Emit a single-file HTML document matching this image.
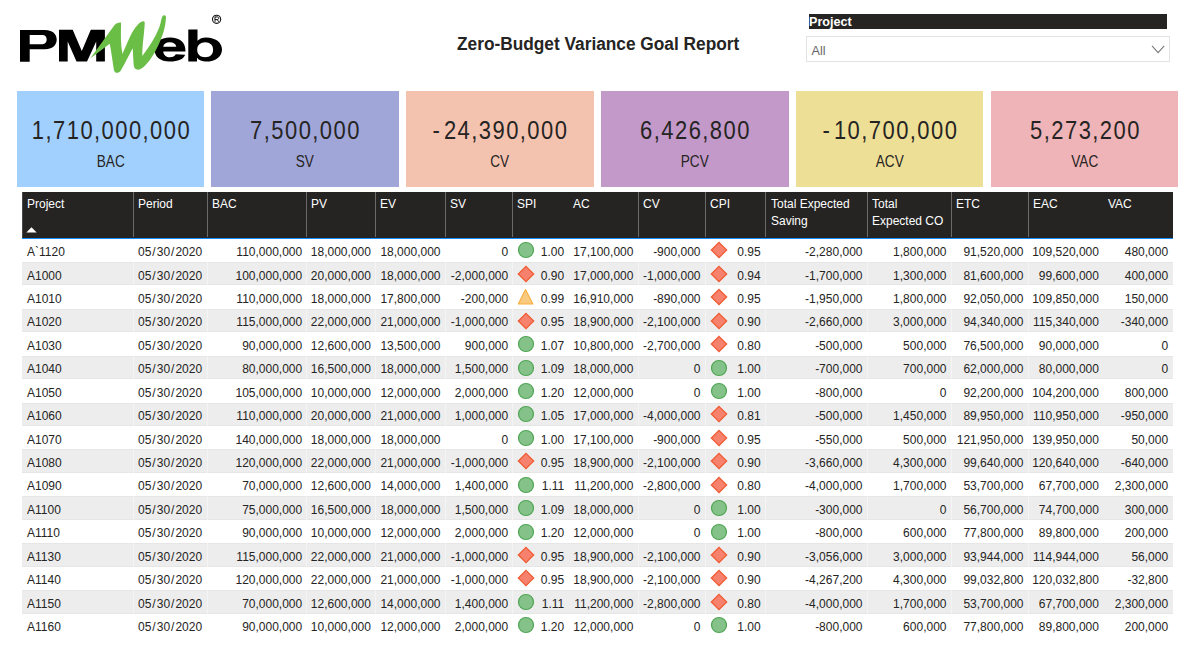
<!DOCTYPE html>
<html><head><meta charset="utf-8"><style>
*{margin:0;padding:0;box-sizing:border-box}
html,body{width:1192px;height:660px;overflow:hidden;background:#fff;font-family:"Liberation Sans",sans-serif;color:#252423}
.a{position:absolute;white-space:nowrap}
.card{position:absolute;top:90.5px;height:96.2px;width:187.3px}
.kv{position:absolute;left:0;right:0;text-align:center;top:115px;font-size:25.5px;line-height:30px;color:#252423;letter-spacing:1.7px;text-indent:1.7px;transform:scaleX(0.86)}
.kl{position:absolute;left:0;right:0;text-align:center;top:152.6px;font-size:15.8px;line-height:18px;color:#252423;transform:scaleX(0.86)}
.hdr{position:absolute;background:#252423}
.ht{position:absolute;color:#fff;font-size:12px;line-height:17px;white-space:nowrap}
.sep{position:absolute;width:1px;background:#6a6a6a}
.row{position:absolute;left:22px;width:1150.8px}
.c{position:absolute;font-size:12px;line-height:14px;white-space:nowrap;color:#252423}
.r{text-align:right}
.sl{margin:0 1.0px}
.ic{position:absolute}
.gsep{position:absolute;width:1px;background:#f4f4f4}
</style></head><body>
<svg class="a" style="left:0;top:0" width="240" height="80" viewBox="0 0 240 80">
<path fill-rule="evenodd" fill="#000" d="M20 29.9 H45 C52 29.9 56.7 33.5 56.7 39.6 C56.7 45.7 52 49.3 45 49.3 H29.7 V61.8 H20 Z M29.7 35.1 H42.5 C45.2 35.1 46.7 37 46.7 39.6 C46.7 42.3 45.2 44.2 42.5 44.2 H29.7 Z"/>
<path fill="#000" d="M59 61.6 V29.8 H72.7 L81.8 51 L90.8 29.8 H104.9 V61.6 H96.2 V41.4 L87 61.6 H76.5 L67.7 41.4 V61.6 Z"/>
<path fill-rule="evenodd" fill="#000" d="M185.4 51.4 H163.2 C163.7 55.2 166.2 57.3 170 57.3 C172.8 57.3 174.8 56.2 175.8 54.3 L185.2 54.8 C183.5 59.3 178 61.6 170 61.6 C160 61.6 154.5 56.5 154.5 49.5 C154.5 42.5 160 37.4 170 37.4 C180 37.4 185.4 42.5 185.4 50 Z M163.2 46.8 H176.3 C175.8 43.8 173.5 42.2 169.7 42.2 C166 42.2 163.7 43.8 163.2 46.8 Z"/>
<path fill-rule="evenodd" fill="#000" d="M188.3 29.4 H197.5 V40.8 C199.5 38.6 202.5 37.4 206 37.4 C215.5 37.4 222 42.3 222 49.5 C222 56.8 215.5 61.6 206 61.6 C202 61.6 199 60.3 197 57.8 V61.6 H188.3 Z M197.2 49.7 C197.2 54.5 200.5 57.2 205.2 57.2 C210 57.2 213.1 54.5 213.1 49.7 C213.1 45 210 42.2 205.2 42.2 C200.5 42.2 197.2 45 197.2 49.7 Z"/>
<path fill="#6abd45" d="M90.4 58.3 L105.1 38 L114.4 25.2 C115.8 23.3 118 22.4 120.2 22.4 C121 22.4 121.2 23 121.1 24 C120.8 34 120.6 44 122.4 54 C127 44 132 30 138 24.5 C140 22.5 142 21.3 143.5 21.3 C144.5 21.3 144.8 22 144.7 23 C144.5 32 142.2 44 142.3 56 C150 46 158 33 160.6 23 C161.4 19 162 15.5 164 15.2 C165.5 15 166.2 16 166 17.5 C165.5 27 163 36 157 48 C151 60 143 69.7 138.2 69.7 C135 69.7 133.8 67.5 133.6 64 L132.7 48.2 C128 57 123 67 120.5 71 C119.5 72.3 118 72.8 116.8 72.8 C114.5 72.8 113.8 70.5 113.6 68 C112.5 60 111 50 109.7 43.8 L91.5 57.6 C90.9 58.1 90.3 58.6 90.4 58.3 Z"/>
<circle cx="216.6" cy="19.3" r="4.1" fill="none" stroke="#111" stroke-width="1.1"/>
<path d="M215 21.8 V16.9 H217 C218.2 16.9 218.7 17.5 218.7 18.3 C218.7 19.1 218.1 19.6 217 19.6 H215 M217.2 19.6 L218.8 21.8" fill="none" stroke="#111" stroke-width="1"/>
</svg>
<div class="a" style="left:457.3px;top:33.2px;font-size:18.3px;line-height:22px;font-weight:bold;color:#252423;transform:scaleX(0.945);transform-origin:0 0">Zero-Budget Variance Goal Report</div>
<div class="a" style="left:809px;top:14.3px;width:358.2px;height:15px;background:#252423"></div>
<div class="a" style="left:809px;top:15px;font-size:12.6px;line-height:14px;font-weight:bold;color:#fff">Project</div>
<div class="a" style="left:806px;top:36.2px;width:363.5px;height:25.5px;border:1px solid #e3e3e3;background:#fff"></div>
<div class="a" style="left:811.5px;top:43.5px;font-size:12.6px;line-height:14px;color:#666">All</div>
<svg class="a" style="left:1150px;top:44px" width="16" height="11" viewBox="0 0 16 11"><path d="M2 1.8 L8.1 8.7 L14.2 1.8" fill="none" stroke="#7a7a7a" stroke-width="1.1"/></svg>
<div class="card" style="left:16.5px;background:#a2d0fe"></div><div class="a kv" style="left:16.5px;width:187.5px;right:auto">1,710,000,000</div><div class="a kl" style="left:16.5px;width:187.5px;right:auto">BAC</div>
<div class="card" style="left:211.4px;background:#a1a6d9"></div><div class="a kv" style="left:211.4px;width:187.5px;right:auto">7,500,000</div><div class="a kl" style="left:211.4px;width:187.5px;right:auto">SV</div>
<div class="card" style="left:406.3px;background:#f4c3b0"></div><div class="a kv" style="left:406.3px;width:187.5px;right:auto"><span style="margin-right:3px">-</span>24,390,000</div><div class="a kl" style="left:406.3px;width:187.5px;right:auto">CV</div>
<div class="card" style="left:601.3px;background:#c399c9"></div><div class="a kv" style="left:601.3px;width:187.5px;right:auto">6,426,800</div><div class="a kl" style="left:601.3px;width:187.5px;right:auto">PCV</div>
<div class="card" style="left:796.2px;background:#eedf97"></div><div class="a kv" style="left:796.2px;width:187.5px;right:auto"><span style="margin-right:3px">-</span>10,700,000</div><div class="a kl" style="left:796.2px;width:187.5px;right:auto">ACV</div>
<div class="card" style="left:991.1px;background:#efb4b7"></div><div class="a kv" style="left:991.1px;width:187.5px;right:auto">5,273,200</div><div class="a kl" style="left:991.1px;width:187.5px;right:auto">VAC</div>
<div class="hdr" style="left:22.0px;top:191.7px;width:1150.8px;height:46.9px"></div>
<div class="a" style="left:22.0px;top:237.8px;width:1150.8px;height:1.2px;background:#118dff"></div>
<div class="a" style="left:22.0px;top:192.0px;width:1px;height:45.6px;background:#4a4a4a"></div><div class="sep" style="left:132.8px;top:192.0px;height:45.3px"></div><div class="sep" style="left:206.8px;top:192.0px;height:45.3px"></div><div class="sep" style="left:305.5px;top:192.0px;height:45.3px"></div><div class="sep" style="left:374.5px;top:192.0px;height:45.3px"></div><div class="sep" style="left:444.8px;top:192.0px;height:45.3px"></div><div class="sep" style="left:511.9px;top:192.0px;height:45.3px"></div><div class="sep" style="left:638.2px;top:192.0px;height:45.3px"></div><div class="sep" style="left:704.5px;top:192.0px;height:45.3px"></div><div class="sep" style="left:764.5px;top:192.0px;height:45.3px"></div><div class="sep" style="left:867.0px;top:192.0px;height:45.3px"></div><div class="sep" style="left:950.9px;top:192.0px;height:45.3px"></div><div class="sep" style="left:1028.1px;top:192.0px;height:45.3px"></div>
<div class="ht" style="left:27px;top:196px">Project</div><div class="ht" style="left:138px;top:196px">Period</div><div class="ht" style="left:212px;top:196px">BAC</div><div class="ht" style="left:311px;top:196px">PV</div><div class="ht" style="left:380px;top:196px">EV</div><div class="ht" style="left:450px;top:196px">SV</div><div class="ht" style="left:517px;top:196px">SPI</div><div class="ht" style="left:573px;top:196px">AC</div><div class="ht" style="left:643px;top:196px">CV</div><div class="ht" style="left:710px;top:196px">CPI</div><div class="ht" style="left:771px;top:196px">Total Expected<br>Saving</div><div class="ht" style="left:872px;top:196px">Total<br>Expected CO</div><div class="ht" style="left:956px;top:196px">ETC</div><div class="ht" style="left:1033px;top:196px">EAC</div><div class="ht" style="left:1108px;top:196px">VAC</div><svg class="a" style="left:26px;top:227px" width="11" height="6" viewBox="0 0 11 6"><path d="M0.3 5.6 L5.5 0.3 L10.7 5.6 Z" fill="#fff"/></svg>
<div class="c" style="left:27px;top:245.06px">A`1120</div><div class="c" style="left:138px;top:245.06px">05<span class="sl">/</span>30<span class="sl">/</span>2020</div><div class="c r" style="right:889.8px;top:245.06px">110,000,000</div><div class="c r" style="right:821.1px;top:245.06px">18,000,000</div><div class="c r" style="right:751.5px;top:245.06px">18,000,000</div><div class="c r" style="right:683.8px;top:245.06px">0</div><div class="c r" style="right:627.8px;top:245.06px">1.00</div><div class="c r" style="right:558.6px;top:245.06px">17,100,000</div><div class="c r" style="right:491.5px;top:245.06px">-900,000</div><div class="c r" style="right:431.3px;top:245.06px">0.95</div><div class="c r" style="right:329.5px;top:245.06px">-2,280,000</div><div class="c r" style="right:245.5px;top:245.06px">1,800,000</div><div class="c r" style="right:168.5px;top:245.06px">91,520,000</div><div class="c r" style="right:93.1px;top:245.06px">109,520,000</div><div class="c r" style="right:23.9px;top:245.06px">480,000</div><svg class="ic" style="left:517.00px;top:241.38px" width="18" height="18" viewBox="0 0 18 18"><circle cx="9" cy="9" r="7.5" fill="#85c28a" stroke="#4ea552" stroke-width="1.2"/></svg><svg class="ic" style="left:710.00px;top:241.38px" width="18" height="18" viewBox="0 0 18 18"><path d="M9 1.3 L16.7 9 L9 16.7 L1.3 9 Z" fill="#f6816d" stroke="#f05a30" stroke-width="1.2" stroke-linejoin="miter"/></svg>
<div class="a" style="left:22.0px;top:262.00px;width:1150.8px;height:23.44px;background:#ededed;box-shadow:inset 0 0.8px #e4e4e4,inset 0 -0.8px #e4e4e4"></div><div class="gsep" style="left:132.8px;top:262.00px;height:23.44px"></div><div class="gsep" style="left:206.8px;top:262.00px;height:23.44px"></div><div class="gsep" style="left:305.5px;top:262.00px;height:23.44px"></div><div class="gsep" style="left:374.5px;top:262.00px;height:23.44px"></div><div class="gsep" style="left:444.8px;top:262.00px;height:23.44px"></div><div class="gsep" style="left:511.9px;top:262.00px;height:23.44px"></div><div class="gsep" style="left:638.2px;top:262.00px;height:23.44px"></div><div class="gsep" style="left:704.5px;top:262.00px;height:23.44px"></div><div class="gsep" style="left:764.5px;top:262.00px;height:23.44px"></div><div class="gsep" style="left:867.0px;top:262.00px;height:23.44px"></div><div class="gsep" style="left:950.9px;top:262.00px;height:23.44px"></div><div class="gsep" style="left:1028.1px;top:262.00px;height:23.44px"></div><div class="c" style="left:27px;top:268.50px">A1000</div><div class="c" style="left:138px;top:268.50px">05<span class="sl">/</span>30<span class="sl">/</span>2020</div><div class="c r" style="right:889.8px;top:268.50px">100,000,000</div><div class="c r" style="right:821.1px;top:268.50px">20,000,000</div><div class="c r" style="right:751.5px;top:268.50px">18,000,000</div><div class="c r" style="right:683.8px;top:268.50px">-2,000,000</div><div class="c r" style="right:627.8px;top:268.50px">0.90</div><div class="c r" style="right:558.6px;top:268.50px">17,000,000</div><div class="c r" style="right:491.5px;top:268.50px">-1,000,000</div><div class="c r" style="right:431.3px;top:268.50px">0.94</div><div class="c r" style="right:329.5px;top:268.50px">-1,700,000</div><div class="c r" style="right:245.5px;top:268.50px">1,300,000</div><div class="c r" style="right:168.5px;top:268.50px">81,600,000</div><div class="c r" style="right:93.1px;top:268.50px">99,600,000</div><div class="c r" style="right:23.9px;top:268.50px">400,000</div><svg class="ic" style="left:517.00px;top:264.81px" width="18" height="18" viewBox="0 0 18 18"><path d="M9 1.3 L16.7 9 L9 16.7 L1.3 9 Z" fill="#f6816d" stroke="#f05a30" stroke-width="1.2" stroke-linejoin="miter"/></svg><svg class="ic" style="left:710.00px;top:264.81px" width="18" height="18" viewBox="0 0 18 18"><path d="M9 1.3 L16.7 9 L9 16.7 L1.3 9 Z" fill="#f6816d" stroke="#f05a30" stroke-width="1.2" stroke-linejoin="miter"/></svg>
<div class="c" style="left:27px;top:291.93px">A1010</div><div class="c" style="left:138px;top:291.93px">05<span class="sl">/</span>30<span class="sl">/</span>2020</div><div class="c r" style="right:889.8px;top:291.93px">110,000,000</div><div class="c r" style="right:821.1px;top:291.93px">18,000,000</div><div class="c r" style="right:751.5px;top:291.93px">17,800,000</div><div class="c r" style="right:683.8px;top:291.93px">-200,000</div><div class="c r" style="right:627.8px;top:291.93px">0.99</div><div class="c r" style="right:558.6px;top:291.93px">16,910,000</div><div class="c r" style="right:491.5px;top:291.93px">-890,000</div><div class="c r" style="right:431.3px;top:291.93px">0.95</div><div class="c r" style="right:329.5px;top:291.93px">-1,950,000</div><div class="c r" style="right:245.5px;top:291.93px">1,800,000</div><div class="c r" style="right:168.5px;top:291.93px">92,050,000</div><div class="c r" style="right:93.1px;top:291.93px">109,850,000</div><div class="c r" style="right:23.9px;top:291.93px">150,000</div><svg class="ic" style="left:517.00px;top:288.25px" width="18" height="18" viewBox="0 0 18 18"><path d="M8.5 1.6 L15.9 16 L1.3 16 Z" fill="#f8ca80" stroke="#f7ad3c" stroke-width="1.1" stroke-linejoin="round"/></svg><svg class="ic" style="left:710.00px;top:288.25px" width="18" height="18" viewBox="0 0 18 18"><path d="M9 1.3 L16.7 9 L9 16.7 L1.3 9 Z" fill="#f6816d" stroke="#f05a30" stroke-width="1.2" stroke-linejoin="miter"/></svg>
<div class="a" style="left:22.0px;top:308.87px;width:1150.8px;height:23.44px;background:#ededed;box-shadow:inset 0 0.8px #e4e4e4,inset 0 -0.8px #e4e4e4"></div><div class="gsep" style="left:132.8px;top:308.87px;height:23.44px"></div><div class="gsep" style="left:206.8px;top:308.87px;height:23.44px"></div><div class="gsep" style="left:305.5px;top:308.87px;height:23.44px"></div><div class="gsep" style="left:374.5px;top:308.87px;height:23.44px"></div><div class="gsep" style="left:444.8px;top:308.87px;height:23.44px"></div><div class="gsep" style="left:511.9px;top:308.87px;height:23.44px"></div><div class="gsep" style="left:638.2px;top:308.87px;height:23.44px"></div><div class="gsep" style="left:704.5px;top:308.87px;height:23.44px"></div><div class="gsep" style="left:764.5px;top:308.87px;height:23.44px"></div><div class="gsep" style="left:867.0px;top:308.87px;height:23.44px"></div><div class="gsep" style="left:950.9px;top:308.87px;height:23.44px"></div><div class="gsep" style="left:1028.1px;top:308.87px;height:23.44px"></div><div class="c" style="left:27px;top:315.37px">A1020</div><div class="c" style="left:138px;top:315.37px">05<span class="sl">/</span>30<span class="sl">/</span>2020</div><div class="c r" style="right:889.8px;top:315.37px">115,000,000</div><div class="c r" style="right:821.1px;top:315.37px">22,000,000</div><div class="c r" style="right:751.5px;top:315.37px">21,000,000</div><div class="c r" style="right:683.8px;top:315.37px">-1,000,000</div><div class="c r" style="right:627.8px;top:315.37px">0.95</div><div class="c r" style="right:558.6px;top:315.37px">18,900,000</div><div class="c r" style="right:491.5px;top:315.37px">-2,100,000</div><div class="c r" style="right:431.3px;top:315.37px">0.90</div><div class="c r" style="right:329.5px;top:315.37px">-2,660,000</div><div class="c r" style="right:245.5px;top:315.37px">3,000,000</div><div class="c r" style="right:168.5px;top:315.37px">94,340,000</div><div class="c r" style="right:93.1px;top:315.37px">115,340,000</div><div class="c r" style="right:23.9px;top:315.37px">-340,000</div><svg class="ic" style="left:517.00px;top:311.69px" width="18" height="18" viewBox="0 0 18 18"><path d="M9 1.3 L16.7 9 L9 16.7 L1.3 9 Z" fill="#f6816d" stroke="#f05a30" stroke-width="1.2" stroke-linejoin="miter"/></svg><svg class="ic" style="left:710.00px;top:311.69px" width="18" height="18" viewBox="0 0 18 18"><path d="M9 1.3 L16.7 9 L9 16.7 L1.3 9 Z" fill="#f6816d" stroke="#f05a30" stroke-width="1.2" stroke-linejoin="miter"/></svg>
<div class="c" style="left:27px;top:338.80px">A1030</div><div class="c" style="left:138px;top:338.80px">05<span class="sl">/</span>30<span class="sl">/</span>2020</div><div class="c r" style="right:889.8px;top:338.80px">90,000,000</div><div class="c r" style="right:821.1px;top:338.80px">12,600,000</div><div class="c r" style="right:751.5px;top:338.80px">13,500,000</div><div class="c r" style="right:683.8px;top:338.80px">900,000</div><div class="c r" style="right:627.8px;top:338.80px">1.07</div><div class="c r" style="right:558.6px;top:338.80px">10,800,000</div><div class="c r" style="right:491.5px;top:338.80px">-2,700,000</div><div class="c r" style="right:431.3px;top:338.80px">0.80</div><div class="c r" style="right:329.5px;top:338.80px">-500,000</div><div class="c r" style="right:245.5px;top:338.80px">500,000</div><div class="c r" style="right:168.5px;top:338.80px">76,500,000</div><div class="c r" style="right:93.1px;top:338.80px">90,000,000</div><div class="c r" style="right:23.9px;top:338.80px">0</div><svg class="ic" style="left:517.00px;top:335.12px" width="18" height="18" viewBox="0 0 18 18"><circle cx="9" cy="9" r="7.5" fill="#85c28a" stroke="#4ea552" stroke-width="1.2"/></svg><svg class="ic" style="left:710.00px;top:335.12px" width="18" height="18" viewBox="0 0 18 18"><path d="M9 1.3 L16.7 9 L9 16.7 L1.3 9 Z" fill="#f6816d" stroke="#f05a30" stroke-width="1.2" stroke-linejoin="miter"/></svg>
<div class="a" style="left:22.0px;top:355.74px;width:1150.8px;height:23.44px;background:#ededed;box-shadow:inset 0 0.8px #e4e4e4,inset 0 -0.8px #e4e4e4"></div><div class="gsep" style="left:132.8px;top:355.74px;height:23.44px"></div><div class="gsep" style="left:206.8px;top:355.74px;height:23.44px"></div><div class="gsep" style="left:305.5px;top:355.74px;height:23.44px"></div><div class="gsep" style="left:374.5px;top:355.74px;height:23.44px"></div><div class="gsep" style="left:444.8px;top:355.74px;height:23.44px"></div><div class="gsep" style="left:511.9px;top:355.74px;height:23.44px"></div><div class="gsep" style="left:638.2px;top:355.74px;height:23.44px"></div><div class="gsep" style="left:704.5px;top:355.74px;height:23.44px"></div><div class="gsep" style="left:764.5px;top:355.74px;height:23.44px"></div><div class="gsep" style="left:867.0px;top:355.74px;height:23.44px"></div><div class="gsep" style="left:950.9px;top:355.74px;height:23.44px"></div><div class="gsep" style="left:1028.1px;top:355.74px;height:23.44px"></div><div class="c" style="left:27px;top:362.24px">A1040</div><div class="c" style="left:138px;top:362.24px">05<span class="sl">/</span>30<span class="sl">/</span>2020</div><div class="c r" style="right:889.8px;top:362.24px">80,000,000</div><div class="c r" style="right:821.1px;top:362.24px">16,500,000</div><div class="c r" style="right:751.5px;top:362.24px">18,000,000</div><div class="c r" style="right:683.8px;top:362.24px">1,500,000</div><div class="c r" style="right:627.8px;top:362.24px">1.09</div><div class="c r" style="right:558.6px;top:362.24px">18,000,000</div><div class="c r" style="right:491.5px;top:362.24px">0</div><div class="c r" style="right:431.3px;top:362.24px">1.00</div><div class="c r" style="right:329.5px;top:362.24px">-700,000</div><div class="c r" style="right:245.5px;top:362.24px">700,000</div><div class="c r" style="right:168.5px;top:362.24px">62,000,000</div><div class="c r" style="right:93.1px;top:362.24px">80,000,000</div><div class="c r" style="right:23.9px;top:362.24px">0</div><svg class="ic" style="left:517.00px;top:358.56px" width="18" height="18" viewBox="0 0 18 18"><circle cx="9" cy="9" r="7.5" fill="#85c28a" stroke="#4ea552" stroke-width="1.2"/></svg><svg class="ic" style="left:710.00px;top:358.56px" width="18" height="18" viewBox="0 0 18 18"><circle cx="9" cy="9" r="7.5" fill="#85c28a" stroke="#4ea552" stroke-width="1.2"/></svg>
<div class="c" style="left:27px;top:385.68px">A1050</div><div class="c" style="left:138px;top:385.68px">05<span class="sl">/</span>30<span class="sl">/</span>2020</div><div class="c r" style="right:889.8px;top:385.68px">105,000,000</div><div class="c r" style="right:821.1px;top:385.68px">10,000,000</div><div class="c r" style="right:751.5px;top:385.68px">12,000,000</div><div class="c r" style="right:683.8px;top:385.68px">2,000,000</div><div class="c r" style="right:627.8px;top:385.68px">1.20</div><div class="c r" style="right:558.6px;top:385.68px">12,000,000</div><div class="c r" style="right:491.5px;top:385.68px">0</div><div class="c r" style="right:431.3px;top:385.68px">1.00</div><div class="c r" style="right:329.5px;top:385.68px">-800,000</div><div class="c r" style="right:245.5px;top:385.68px">0</div><div class="c r" style="right:168.5px;top:385.68px">92,200,000</div><div class="c r" style="right:93.1px;top:385.68px">104,200,000</div><div class="c r" style="right:23.9px;top:385.68px">800,000</div><svg class="ic" style="left:517.00px;top:381.99px" width="18" height="18" viewBox="0 0 18 18"><circle cx="9" cy="9" r="7.5" fill="#85c28a" stroke="#4ea552" stroke-width="1.2"/></svg><svg class="ic" style="left:710.00px;top:381.99px" width="18" height="18" viewBox="0 0 18 18"><circle cx="9" cy="9" r="7.5" fill="#85c28a" stroke="#4ea552" stroke-width="1.2"/></svg>
<div class="a" style="left:22.0px;top:402.61px;width:1150.8px;height:23.44px;background:#ededed;box-shadow:inset 0 0.8px #e4e4e4,inset 0 -0.8px #e4e4e4"></div><div class="gsep" style="left:132.8px;top:402.61px;height:23.44px"></div><div class="gsep" style="left:206.8px;top:402.61px;height:23.44px"></div><div class="gsep" style="left:305.5px;top:402.61px;height:23.44px"></div><div class="gsep" style="left:374.5px;top:402.61px;height:23.44px"></div><div class="gsep" style="left:444.8px;top:402.61px;height:23.44px"></div><div class="gsep" style="left:511.9px;top:402.61px;height:23.44px"></div><div class="gsep" style="left:638.2px;top:402.61px;height:23.44px"></div><div class="gsep" style="left:704.5px;top:402.61px;height:23.44px"></div><div class="gsep" style="left:764.5px;top:402.61px;height:23.44px"></div><div class="gsep" style="left:867.0px;top:402.61px;height:23.44px"></div><div class="gsep" style="left:950.9px;top:402.61px;height:23.44px"></div><div class="gsep" style="left:1028.1px;top:402.61px;height:23.44px"></div><div class="c" style="left:27px;top:409.11px">A1060</div><div class="c" style="left:138px;top:409.11px">05<span class="sl">/</span>30<span class="sl">/</span>2020</div><div class="c r" style="right:889.8px;top:409.11px">110,000,000</div><div class="c r" style="right:821.1px;top:409.11px">20,000,000</div><div class="c r" style="right:751.5px;top:409.11px">21,000,000</div><div class="c r" style="right:683.8px;top:409.11px">1,000,000</div><div class="c r" style="right:627.8px;top:409.11px">1.05</div><div class="c r" style="right:558.6px;top:409.11px">17,000,000</div><div class="c r" style="right:491.5px;top:409.11px">-4,000,000</div><div class="c r" style="right:431.3px;top:409.11px">0.81</div><div class="c r" style="right:329.5px;top:409.11px">-500,000</div><div class="c r" style="right:245.5px;top:409.11px">1,450,000</div><div class="c r" style="right:168.5px;top:409.11px">89,950,000</div><div class="c r" style="right:93.1px;top:409.11px">110,950,000</div><div class="c r" style="right:23.9px;top:409.11px">-950,000</div><svg class="ic" style="left:517.00px;top:405.43px" width="18" height="18" viewBox="0 0 18 18"><circle cx="9" cy="9" r="7.5" fill="#85c28a" stroke="#4ea552" stroke-width="1.2"/></svg><svg class="ic" style="left:710.00px;top:405.43px" width="18" height="18" viewBox="0 0 18 18"><path d="M9 1.3 L16.7 9 L9 16.7 L1.3 9 Z" fill="#f6816d" stroke="#f05a30" stroke-width="1.2" stroke-linejoin="miter"/></svg>
<div class="c" style="left:27px;top:432.55px">A1070</div><div class="c" style="left:138px;top:432.55px">05<span class="sl">/</span>30<span class="sl">/</span>2020</div><div class="c r" style="right:889.8px;top:432.55px">140,000,000</div><div class="c r" style="right:821.1px;top:432.55px">18,000,000</div><div class="c r" style="right:751.5px;top:432.55px">18,000,000</div><div class="c r" style="right:683.8px;top:432.55px">0</div><div class="c r" style="right:627.8px;top:432.55px">1.00</div><div class="c r" style="right:558.6px;top:432.55px">17,100,000</div><div class="c r" style="right:491.5px;top:432.55px">-900,000</div><div class="c r" style="right:431.3px;top:432.55px">0.95</div><div class="c r" style="right:329.5px;top:432.55px">-550,000</div><div class="c r" style="right:245.5px;top:432.55px">500,000</div><div class="c r" style="right:168.5px;top:432.55px">121,950,000</div><div class="c r" style="right:93.1px;top:432.55px">139,950,000</div><div class="c r" style="right:23.9px;top:432.55px">50,000</div><svg class="ic" style="left:517.00px;top:428.87px" width="18" height="18" viewBox="0 0 18 18"><circle cx="9" cy="9" r="7.5" fill="#85c28a" stroke="#4ea552" stroke-width="1.2"/></svg><svg class="ic" style="left:710.00px;top:428.87px" width="18" height="18" viewBox="0 0 18 18"><path d="M9 1.3 L16.7 9 L9 16.7 L1.3 9 Z" fill="#f6816d" stroke="#f05a30" stroke-width="1.2" stroke-linejoin="miter"/></svg>
<div class="a" style="left:22.0px;top:449.48px;width:1150.8px;height:23.44px;background:#ededed;box-shadow:inset 0 0.8px #e4e4e4,inset 0 -0.8px #e4e4e4"></div><div class="gsep" style="left:132.8px;top:449.48px;height:23.44px"></div><div class="gsep" style="left:206.8px;top:449.48px;height:23.44px"></div><div class="gsep" style="left:305.5px;top:449.48px;height:23.44px"></div><div class="gsep" style="left:374.5px;top:449.48px;height:23.44px"></div><div class="gsep" style="left:444.8px;top:449.48px;height:23.44px"></div><div class="gsep" style="left:511.9px;top:449.48px;height:23.44px"></div><div class="gsep" style="left:638.2px;top:449.48px;height:23.44px"></div><div class="gsep" style="left:704.5px;top:449.48px;height:23.44px"></div><div class="gsep" style="left:764.5px;top:449.48px;height:23.44px"></div><div class="gsep" style="left:867.0px;top:449.48px;height:23.44px"></div><div class="gsep" style="left:950.9px;top:449.48px;height:23.44px"></div><div class="gsep" style="left:1028.1px;top:449.48px;height:23.44px"></div><div class="c" style="left:27px;top:455.98px">A1080</div><div class="c" style="left:138px;top:455.98px">05<span class="sl">/</span>30<span class="sl">/</span>2020</div><div class="c r" style="right:889.8px;top:455.98px">120,000,000</div><div class="c r" style="right:821.1px;top:455.98px">22,000,000</div><div class="c r" style="right:751.5px;top:455.98px">21,000,000</div><div class="c r" style="right:683.8px;top:455.98px">-1,000,000</div><div class="c r" style="right:627.8px;top:455.98px">0.95</div><div class="c r" style="right:558.6px;top:455.98px">18,900,000</div><div class="c r" style="right:491.5px;top:455.98px">-2,100,000</div><div class="c r" style="right:431.3px;top:455.98px">0.90</div><div class="c r" style="right:329.5px;top:455.98px">-3,660,000</div><div class="c r" style="right:245.5px;top:455.98px">4,300,000</div><div class="c r" style="right:168.5px;top:455.98px">99,640,000</div><div class="c r" style="right:93.1px;top:455.98px">120,640,000</div><div class="c r" style="right:23.9px;top:455.98px">-640,000</div><svg class="ic" style="left:517.00px;top:452.30px" width="18" height="18" viewBox="0 0 18 18"><path d="M9 1.3 L16.7 9 L9 16.7 L1.3 9 Z" fill="#f6816d" stroke="#f05a30" stroke-width="1.2" stroke-linejoin="miter"/></svg><svg class="ic" style="left:710.00px;top:452.30px" width="18" height="18" viewBox="0 0 18 18"><path d="M9 1.3 L16.7 9 L9 16.7 L1.3 9 Z" fill="#f6816d" stroke="#f05a30" stroke-width="1.2" stroke-linejoin="miter"/></svg>
<div class="c" style="left:27px;top:479.42px">A1090</div><div class="c" style="left:138px;top:479.42px">05<span class="sl">/</span>30<span class="sl">/</span>2020</div><div class="c r" style="right:889.8px;top:479.42px">70,000,000</div><div class="c r" style="right:821.1px;top:479.42px">12,600,000</div><div class="c r" style="right:751.5px;top:479.42px">14,000,000</div><div class="c r" style="right:683.8px;top:479.42px">1,400,000</div><div class="c r" style="right:627.8px;top:479.42px">1.11</div><div class="c r" style="right:558.6px;top:479.42px">11,200,000</div><div class="c r" style="right:491.5px;top:479.42px">-2,800,000</div><div class="c r" style="right:431.3px;top:479.42px">0.80</div><div class="c r" style="right:329.5px;top:479.42px">-4,000,000</div><div class="c r" style="right:245.5px;top:479.42px">1,700,000</div><div class="c r" style="right:168.5px;top:479.42px">53,700,000</div><div class="c r" style="right:93.1px;top:479.42px">67,700,000</div><div class="c r" style="right:23.9px;top:479.42px">2,300,000</div><svg class="ic" style="left:517.00px;top:475.74px" width="18" height="18" viewBox="0 0 18 18"><circle cx="9" cy="9" r="7.5" fill="#85c28a" stroke="#4ea552" stroke-width="1.2"/></svg><svg class="ic" style="left:710.00px;top:475.74px" width="18" height="18" viewBox="0 0 18 18"><path d="M9 1.3 L16.7 9 L9 16.7 L1.3 9 Z" fill="#f6816d" stroke="#f05a30" stroke-width="1.2" stroke-linejoin="miter"/></svg>
<div class="a" style="left:22.0px;top:496.36px;width:1150.8px;height:23.44px;background:#ededed;box-shadow:inset 0 0.8px #e4e4e4,inset 0 -0.8px #e4e4e4"></div><div class="gsep" style="left:132.8px;top:496.36px;height:23.44px"></div><div class="gsep" style="left:206.8px;top:496.36px;height:23.44px"></div><div class="gsep" style="left:305.5px;top:496.36px;height:23.44px"></div><div class="gsep" style="left:374.5px;top:496.36px;height:23.44px"></div><div class="gsep" style="left:444.8px;top:496.36px;height:23.44px"></div><div class="gsep" style="left:511.9px;top:496.36px;height:23.44px"></div><div class="gsep" style="left:638.2px;top:496.36px;height:23.44px"></div><div class="gsep" style="left:704.5px;top:496.36px;height:23.44px"></div><div class="gsep" style="left:764.5px;top:496.36px;height:23.44px"></div><div class="gsep" style="left:867.0px;top:496.36px;height:23.44px"></div><div class="gsep" style="left:950.9px;top:496.36px;height:23.44px"></div><div class="gsep" style="left:1028.1px;top:496.36px;height:23.44px"></div><div class="c" style="left:27px;top:502.86px">A1100</div><div class="c" style="left:138px;top:502.86px">05<span class="sl">/</span>30<span class="sl">/</span>2020</div><div class="c r" style="right:889.8px;top:502.86px">75,000,000</div><div class="c r" style="right:821.1px;top:502.86px">16,500,000</div><div class="c r" style="right:751.5px;top:502.86px">18,000,000</div><div class="c r" style="right:683.8px;top:502.86px">1,500,000</div><div class="c r" style="right:627.8px;top:502.86px">1.09</div><div class="c r" style="right:558.6px;top:502.86px">18,000,000</div><div class="c r" style="right:491.5px;top:502.86px">0</div><div class="c r" style="right:431.3px;top:502.86px">1.00</div><div class="c r" style="right:329.5px;top:502.86px">-300,000</div><div class="c r" style="right:245.5px;top:502.86px">0</div><div class="c r" style="right:168.5px;top:502.86px">56,700,000</div><div class="c r" style="right:93.1px;top:502.86px">74,700,000</div><div class="c r" style="right:23.9px;top:502.86px">300,000</div><svg class="ic" style="left:517.00px;top:499.17px" width="18" height="18" viewBox="0 0 18 18"><circle cx="9" cy="9" r="7.5" fill="#85c28a" stroke="#4ea552" stroke-width="1.2"/></svg><svg class="ic" style="left:710.00px;top:499.17px" width="18" height="18" viewBox="0 0 18 18"><circle cx="9" cy="9" r="7.5" fill="#85c28a" stroke="#4ea552" stroke-width="1.2"/></svg>
<div class="c" style="left:27px;top:526.29px">A1110</div><div class="c" style="left:138px;top:526.29px">05<span class="sl">/</span>30<span class="sl">/</span>2020</div><div class="c r" style="right:889.8px;top:526.29px">90,000,000</div><div class="c r" style="right:821.1px;top:526.29px">10,000,000</div><div class="c r" style="right:751.5px;top:526.29px">12,000,000</div><div class="c r" style="right:683.8px;top:526.29px">2,000,000</div><div class="c r" style="right:627.8px;top:526.29px">1.20</div><div class="c r" style="right:558.6px;top:526.29px">12,000,000</div><div class="c r" style="right:491.5px;top:526.29px">0</div><div class="c r" style="right:431.3px;top:526.29px">1.00</div><div class="c r" style="right:329.5px;top:526.29px">-800,000</div><div class="c r" style="right:245.5px;top:526.29px">600,000</div><div class="c r" style="right:168.5px;top:526.29px">77,800,000</div><div class="c r" style="right:93.1px;top:526.29px">89,800,000</div><div class="c r" style="right:23.9px;top:526.29px">200,000</div><svg class="ic" style="left:517.00px;top:522.61px" width="18" height="18" viewBox="0 0 18 18"><circle cx="9" cy="9" r="7.5" fill="#85c28a" stroke="#4ea552" stroke-width="1.2"/></svg><svg class="ic" style="left:710.00px;top:522.61px" width="18" height="18" viewBox="0 0 18 18"><circle cx="9" cy="9" r="7.5" fill="#85c28a" stroke="#4ea552" stroke-width="1.2"/></svg>
<div class="a" style="left:22.0px;top:543.23px;width:1150.8px;height:23.44px;background:#ededed;box-shadow:inset 0 0.8px #e4e4e4,inset 0 -0.8px #e4e4e4"></div><div class="gsep" style="left:132.8px;top:543.23px;height:23.44px"></div><div class="gsep" style="left:206.8px;top:543.23px;height:23.44px"></div><div class="gsep" style="left:305.5px;top:543.23px;height:23.44px"></div><div class="gsep" style="left:374.5px;top:543.23px;height:23.44px"></div><div class="gsep" style="left:444.8px;top:543.23px;height:23.44px"></div><div class="gsep" style="left:511.9px;top:543.23px;height:23.44px"></div><div class="gsep" style="left:638.2px;top:543.23px;height:23.44px"></div><div class="gsep" style="left:704.5px;top:543.23px;height:23.44px"></div><div class="gsep" style="left:764.5px;top:543.23px;height:23.44px"></div><div class="gsep" style="left:867.0px;top:543.23px;height:23.44px"></div><div class="gsep" style="left:950.9px;top:543.23px;height:23.44px"></div><div class="gsep" style="left:1028.1px;top:543.23px;height:23.44px"></div><div class="c" style="left:27px;top:549.73px">A1130</div><div class="c" style="left:138px;top:549.73px">05<span class="sl">/</span>30<span class="sl">/</span>2020</div><div class="c r" style="right:889.8px;top:549.73px">115,000,000</div><div class="c r" style="right:821.1px;top:549.73px">22,000,000</div><div class="c r" style="right:751.5px;top:549.73px">21,000,000</div><div class="c r" style="right:683.8px;top:549.73px">-1,000,000</div><div class="c r" style="right:627.8px;top:549.73px">0.95</div><div class="c r" style="right:558.6px;top:549.73px">18,900,000</div><div class="c r" style="right:491.5px;top:549.73px">-2,100,000</div><div class="c r" style="right:431.3px;top:549.73px">0.90</div><div class="c r" style="right:329.5px;top:549.73px">-3,056,000</div><div class="c r" style="right:245.5px;top:549.73px">3,000,000</div><div class="c r" style="right:168.5px;top:549.73px">93,944,000</div><div class="c r" style="right:93.1px;top:549.73px">114,944,000</div><div class="c r" style="right:23.9px;top:549.73px">56,000</div><svg class="ic" style="left:517.00px;top:546.05px" width="18" height="18" viewBox="0 0 18 18"><path d="M9 1.3 L16.7 9 L9 16.7 L1.3 9 Z" fill="#f6816d" stroke="#f05a30" stroke-width="1.2" stroke-linejoin="miter"/></svg><svg class="ic" style="left:710.00px;top:546.05px" width="18" height="18" viewBox="0 0 18 18"><path d="M9 1.3 L16.7 9 L9 16.7 L1.3 9 Z" fill="#f6816d" stroke="#f05a30" stroke-width="1.2" stroke-linejoin="miter"/></svg>
<div class="c" style="left:27px;top:573.16px">A1140</div><div class="c" style="left:138px;top:573.16px">05<span class="sl">/</span>30<span class="sl">/</span>2020</div><div class="c r" style="right:889.8px;top:573.16px">120,000,000</div><div class="c r" style="right:821.1px;top:573.16px">22,000,000</div><div class="c r" style="right:751.5px;top:573.16px">21,000,000</div><div class="c r" style="right:683.8px;top:573.16px">-1,000,000</div><div class="c r" style="right:627.8px;top:573.16px">0.95</div><div class="c r" style="right:558.6px;top:573.16px">18,900,000</div><div class="c r" style="right:491.5px;top:573.16px">-2,100,000</div><div class="c r" style="right:431.3px;top:573.16px">0.90</div><div class="c r" style="right:329.5px;top:573.16px">-4,267,200</div><div class="c r" style="right:245.5px;top:573.16px">4,300,000</div><div class="c r" style="right:168.5px;top:573.16px">99,032,800</div><div class="c r" style="right:93.1px;top:573.16px">120,032,800</div><div class="c r" style="right:23.9px;top:573.16px">-32,800</div><svg class="ic" style="left:517.00px;top:569.48px" width="18" height="18" viewBox="0 0 18 18"><path d="M9 1.3 L16.7 9 L9 16.7 L1.3 9 Z" fill="#f6816d" stroke="#f05a30" stroke-width="1.2" stroke-linejoin="miter"/></svg><svg class="ic" style="left:710.00px;top:569.48px" width="18" height="18" viewBox="0 0 18 18"><path d="M9 1.3 L16.7 9 L9 16.7 L1.3 9 Z" fill="#f6816d" stroke="#f05a30" stroke-width="1.2" stroke-linejoin="miter"/></svg>
<div class="a" style="left:22.0px;top:590.10px;width:1150.8px;height:23.44px;background:#ededed;box-shadow:inset 0 0.8px #e4e4e4,inset 0 -0.8px #e4e4e4"></div><div class="gsep" style="left:132.8px;top:590.10px;height:23.44px"></div><div class="gsep" style="left:206.8px;top:590.10px;height:23.44px"></div><div class="gsep" style="left:305.5px;top:590.10px;height:23.44px"></div><div class="gsep" style="left:374.5px;top:590.10px;height:23.44px"></div><div class="gsep" style="left:444.8px;top:590.10px;height:23.44px"></div><div class="gsep" style="left:511.9px;top:590.10px;height:23.44px"></div><div class="gsep" style="left:638.2px;top:590.10px;height:23.44px"></div><div class="gsep" style="left:704.5px;top:590.10px;height:23.44px"></div><div class="gsep" style="left:764.5px;top:590.10px;height:23.44px"></div><div class="gsep" style="left:867.0px;top:590.10px;height:23.44px"></div><div class="gsep" style="left:950.9px;top:590.10px;height:23.44px"></div><div class="gsep" style="left:1028.1px;top:590.10px;height:23.44px"></div><div class="c" style="left:27px;top:596.60px">A1150</div><div class="c" style="left:138px;top:596.60px">05<span class="sl">/</span>30<span class="sl">/</span>2020</div><div class="c r" style="right:889.8px;top:596.60px">70,000,000</div><div class="c r" style="right:821.1px;top:596.60px">12,600,000</div><div class="c r" style="right:751.5px;top:596.60px">14,000,000</div><div class="c r" style="right:683.8px;top:596.60px">1,400,000</div><div class="c r" style="right:627.8px;top:596.60px">1.11</div><div class="c r" style="right:558.6px;top:596.60px">11,200,000</div><div class="c r" style="right:491.5px;top:596.60px">-2,800,000</div><div class="c r" style="right:431.3px;top:596.60px">0.80</div><div class="c r" style="right:329.5px;top:596.60px">-4,000,000</div><div class="c r" style="right:245.5px;top:596.60px">1,700,000</div><div class="c r" style="right:168.5px;top:596.60px">53,700,000</div><div class="c r" style="right:93.1px;top:596.60px">67,700,000</div><div class="c r" style="right:23.9px;top:596.60px">2,300,000</div><svg class="ic" style="left:517.00px;top:592.92px" width="18" height="18" viewBox="0 0 18 18"><circle cx="9" cy="9" r="7.5" fill="#85c28a" stroke="#4ea552" stroke-width="1.2"/></svg><svg class="ic" style="left:710.00px;top:592.92px" width="18" height="18" viewBox="0 0 18 18"><path d="M9 1.3 L16.7 9 L9 16.7 L1.3 9 Z" fill="#f6816d" stroke="#f05a30" stroke-width="1.2" stroke-linejoin="miter"/></svg>
<div class="c" style="left:27px;top:620.04px">A1160</div><div class="c" style="left:138px;top:620.04px">05<span class="sl">/</span>30<span class="sl">/</span>2020</div><div class="c r" style="right:889.8px;top:620.04px">90,000,000</div><div class="c r" style="right:821.1px;top:620.04px">10,000,000</div><div class="c r" style="right:751.5px;top:620.04px">12,000,000</div><div class="c r" style="right:683.8px;top:620.04px">2,000,000</div><div class="c r" style="right:627.8px;top:620.04px">1.20</div><div class="c r" style="right:558.6px;top:620.04px">12,000,000</div><div class="c r" style="right:491.5px;top:620.04px">0</div><div class="c r" style="right:431.3px;top:620.04px">1.00</div><div class="c r" style="right:329.5px;top:620.04px">-800,000</div><div class="c r" style="right:245.5px;top:620.04px">600,000</div><div class="c r" style="right:168.5px;top:620.04px">77,800,000</div><div class="c r" style="right:93.1px;top:620.04px">89,800,000</div><div class="c r" style="right:23.9px;top:620.04px">200,000</div><svg class="ic" style="left:517.00px;top:616.35px" width="18" height="18" viewBox="0 0 18 18"><circle cx="9" cy="9" r="7.5" fill="#85c28a" stroke="#4ea552" stroke-width="1.2"/></svg><svg class="ic" style="left:710.00px;top:616.35px" width="18" height="18" viewBox="0 0 18 18"><circle cx="9" cy="9" r="7.5" fill="#85c28a" stroke="#4ea552" stroke-width="1.2"/></svg>
</body></html>
